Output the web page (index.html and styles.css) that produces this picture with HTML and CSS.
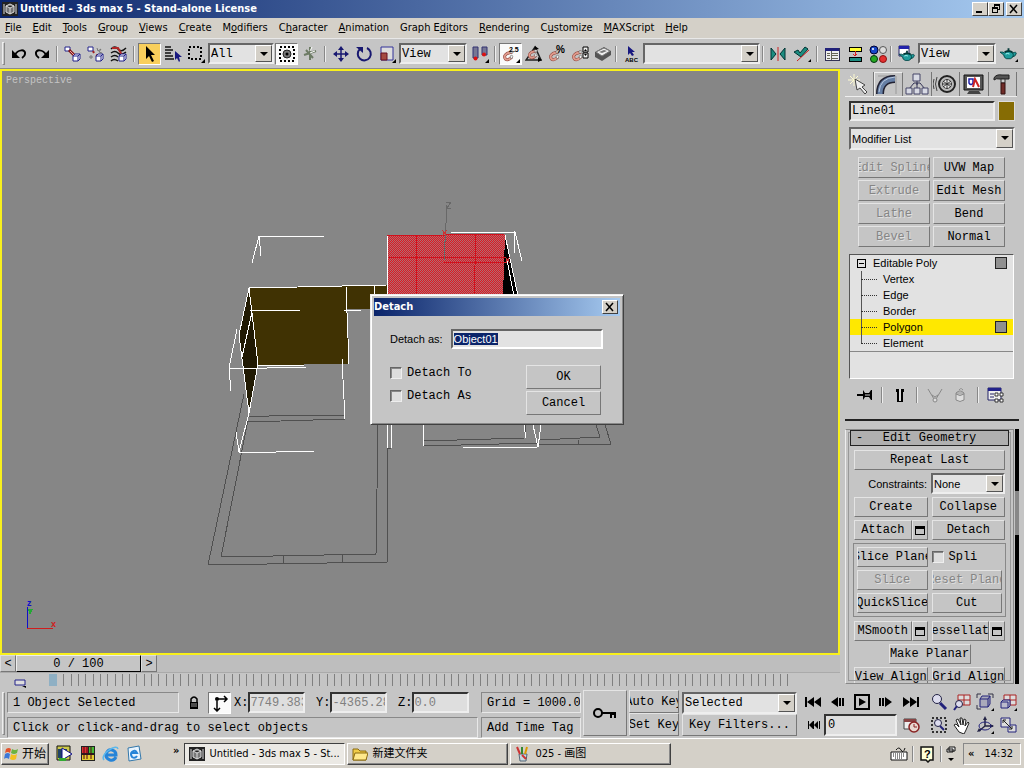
FILE: index.html
```html
<!DOCTYPE html>
<html lang="en">
<head>
    <meta charset="UTF-8">
    <meta name="viewport" content="width=device-width, initial-scale=1.0">
    <title>Untitled - 3ds max 5 - Stand-alone License</title>
    <link rel="stylesheet" href="styles.css">
</head>
<body>
    <!-- shared icon parts -->
    <svg class="defs" width="0" height="0">
        <symbol id="cube" viewBox="0 0 9 9"><path d="M1 3h5v5H1zM1 3l2-2h5v5L6 8M6 3l2-2" fill="#fff" stroke="#22228a"/></symbol>
        <symbol id="magnet" viewBox="0 0 12 12"><path d="M10 2 5 3.500Q1 6 3.500 9 6 11 10 7" fill="none" stroke="#8a4038" stroke-width="3"/><path d="M10 2 5 3.500Q1 6 3.500 9 6 11 10 7" fill="none" stroke="#e09a8c" stroke-width="2"/><path d="M8 1l3 0v2H8zM8 6l2-1 1 2-2 2z" fill="#eee" stroke="#555" stroke-width=".5"/></symbol>
        <symbol id="teapot" viewBox="0 0 18 14"><path d="M5 5Q9 2 13 5q3 5-2 7H7Q4 11 4 8L0 5h3l2 1M13 6q5-2 4 1t-4 3" fill="#1f9c9c" stroke="#064848"/><path d="M5 5q4-2 8 0M9 3V1" fill="none" stroke="#043838" stroke-width="2"/><path d="M6 7q2-1 4 0" stroke="#b4ffff" fill="none"/></symbol>
        <symbol id="maxlogo" viewBox="0 0 16 16"><path fill="#222" d="M0 1h16v14H0z"/><path d="M2 3v10M14 3v10M4 5l4-2 4 2v6l-4 2-4-2zM4 5l4 2 4-2M8 7v6" stroke="#ddd" fill="#777"/></symbol>
        <symbol id="corner" viewBox="0 0 4 4"><path d="M4 0v4H0z"/></symbol>
    </svg>

    <header class="titlebar">
        <svg width="16" height="16"><use href="#maxlogo"/></svg>
        <h1>Untitled - 3ds max 5 - Stand-alone License</h1>
        <button class="win" aria-label="Minimize"><svg width="12" height="10"><path d="M2 7h6v2H2z"/></svg></button>
        <button class="win" aria-label="Restore"><svg width="12" height="10" shape-rendering="crispEdges"><path d="M4 0h6v6H8V5h1V2H5v1H4zM2 3h6v6H2zM3 5v3h4V5z" fill-rule="evenodd"/></svg></button>
        <button class="win close" aria-label="Close"><svg width="12" height="10"><path d="M2 1l7 8M9 1 2 9" stroke="#000" stroke-width="1.500"/></svg></button>
    </header>

    <nav class="menu">
        <a href="#"><u>F</u>ile</a>
        <a href="#"><u>E</u>dit</a>
        <a href="#"><u>T</u>ools</a>
        <a href="#"><u>G</u>roup</a>
        <a href="#"><u>V</u>iews</a>
        <a href="#"><u>C</u>reate</a>
        <a href="#">M<u>o</u>difiers</a>
        <a href="#">C<u>h</u>aracter</a>
        <a href="#"><u>A</u>nimation</a>
        <a href="#">Graph E<u>d</u>itors</a>
        <a href="#"><u>R</u>endering</a>
        <a href="#">C<u>u</u>stomize</a>
        <a href="#"><u>M</u>AXScript</a>
        <a href="#"><u>H</u>elp</a>
    </nav>

    <div class="toolbar">
        <i class="handle"></i>
        <button class="tool" aria-label="Undo"><svg viewBox="0 0 18 18"><path d="M2 5v8h8z"/><path d="M5 10C8 4 16 4 15 9q0 2-3 4" fill="none" stroke="#000" stroke-width="2"/></svg></button>
        <button class="tool" aria-label="Redo"><svg viewBox="0 0 18 18"><path d="M16 5v8H8z"/><path d="M13 10C10 4 2 4 3 9q0 2 3 4" fill="none" stroke="#000" stroke-width="2"/></svg></button>
        <i class="sep"></i>
        <button class="tool" aria-label="Select and Link"><svg viewBox="0 0 18 18"><path d="M1 2h5v4H1z" fill="#fff" stroke="#22228a"/><path d="M5 5l6 6" stroke="#801818" stroke-width="3"/><path d="M6 6l4 4" stroke="#f0a0a0"/><use href="#cube" x="8" y="8" width="9" height="9"/></svg></button>
        <button class="tool" aria-label="Unlink"><svg viewBox="0 0 18 18"><path d="M1 2h5v4H1z" fill="#fff" stroke="#22228a"/><path d="M6 6l1 2M9 10l2 1" stroke="#a02020" stroke-width="2"/><path d="M10 3l1 3 3-2-2 3 3 1M2 12h4M4 10v4" stroke="#777" fill="none"/><use href="#cube" x="8" y="8" width="9" height="9"/></svg></button>
        <button class="tool" aria-label="Bind to Space Warp"><svg viewBox="0 0 18 18"><path d="M1 4q4-4 7 0t8-1M1 8q4-3 7 0t8-1M1 12q4-3 7 0M1 16q3-3 7 0" stroke="#111" fill="none" stroke-width="1.500"/><path d="M2 3h6l4 7" stroke="#b02828" stroke-width="2" fill="none"/><use href="#cube" x="8" y="8" width="9" height="9"/></svg></button>
        <i class="sep"></i>
        <button class="tool active" aria-label="Select"><svg viewBox="0 0 18 18"><path d="M5 1v13l3-3 3 6 2-1-3-6h4z"/></svg></button>
        <button class="tool" aria-label="Select by Name"><svg viewBox="0 0 18 18"><path d="M1 2h6M1 5h8M1 8h6M1 11h8M1 14h9" stroke="#111" stroke-width="1.500"/><path d="M11 6v9l2-2 2 4 1-1-1-4h3z" fill="#181880"/></svg></button>
        <button class="tool" aria-label="Selection Region"><svg viewBox="0 0 18 18"><path d="M2 2h12v12H2z" fill="none" stroke="#000" stroke-width="2" stroke-dasharray="2 2"/><use href="#corner" x="14" y="14" width="4" height="4"/></svg></button>
        <span class="combo w-all"><select aria-label="Selection Filter"><option>All</option></select></span>
        <button class="tool on" aria-label="Crossing"><svg viewBox="0 0 18 18"><path d="M2 2h14v14H2z" fill="none" stroke="#000" stroke-width="2" stroke-dasharray="2 2"/><circle cx="9" cy="9" r="4" fill="#777" stroke="#222"/><circle cx="9" cy="9" r="1.500"/></svg></button>
        <button class="tool" aria-label="Select and Manipulate"><svg viewBox="0 0 18 18"><path d="M9 2v13M3 10l12-4M5 5l7 8" stroke="#6d7b64" stroke-width="2"/><path d="M9 6l2-4M9 8l5-2" stroke="#fff"/></svg></button>
        <i class="sep"></i>
        <button class="tool" aria-label="Move"><svg viewBox="0 0 18 18"><path d="M9 3v12M3 9h12" stroke="#181870" stroke-width="1.500"/><path d="M9 1l3 4H6zM9 17l3-4H6zM1 9l4-3v6zM17 9l-4-3v6z" fill="#181870"/></svg></button>
        <button class="tool" aria-label="Rotate"><svg viewBox="0 0 18 18"><path d="M5 4a6.500 6.500 0 1 0 7-1" fill="none" stroke="#181870" stroke-width="2"/><path d="M1 2h7v6z" fill="#181870"/></svg></button>
        <button class="tool" aria-label="Scale"><svg viewBox="0 0 18 18"><path d="M3 2h12v13H3z" fill="#ddd" stroke="#333399"/><path d="M3 8h6v7H3z" fill="#a44a42" stroke="#612"/><use href="#corner" x="14" y="14" width="4" height="4"/></svg></button>
        <span class="combo w-view"><select aria-label="Reference Coordinate System"><option>View</option></select></span>
        <button class="tool" aria-label="Pivot Point Center"><svg viewBox="0 0 18 18"><path d="M2 2h5v11H2zM11 2h5v8h-5z" fill="#777795" stroke="#333370"/><circle cx="4.500" cy="13.500" r="2" fill="#d11"/><circle cx="13" cy="9.500" r="2" fill="#d11"/><use href="#corner" x="14" y="14" width="4" height="4"/></svg></button>
        <i class="sep"></i>
        <button class="tool on" aria-label="Snap Toggle"><svg viewBox="0 0 18 18"><use href="#magnet" x="0" y="5" width="12" height="12"/><text x="7" y="7" class="tiny">2.5</text><use href="#corner" x="14" y="14" width="4" height="4"/></svg></button>
        <button class="tool" aria-label="Angle Snap"><svg viewBox="0 0 18 18"><path d="M1 15h15L10 2z" fill="none" stroke="#222" stroke-width="1.500"/><path d="M10 1l4 3-5 1zM17 15l-4-3v5z"/><use href="#magnet" x="2" y="4" width="11" height="11"/></svg></button>
        <button class="tool" aria-label="Percent Snap"><svg viewBox="0 0 18 18"><use href="#magnet" x="0" y="5" width="12" height="12"/><text x="8" y="8" class="pct">%</text></svg></button>
        <button class="tool" aria-label="Spinner Snap"><svg viewBox="0 0 18 18"><use href="#magnet" x="0" y="5" width="12" height="12"/><path d="M12 2h5v5h-5zM12 8h5v5h-5z" fill="#eee" stroke="#000"/><path d="M13 6l1.500-2L16 6zM13 9l1.500 2L16 9z"/></svg></button>
        <button class="tool" aria-label="Keyboard Shortcut Override"><svg viewBox="0 0 18 18"><path d="M1 7l9-5 7 4v4l-9 6-7-4z" fill="#555"/><path d="M2 7l8-4 6 3-8 5z" fill="#eee" stroke="#777"/><path d="M5 7l5-2 3 1-5 2z" fill="#777"/></svg></button>
        <i class="sep thin"></i>
        <button class="tool" aria-label="Named Selections"><svg viewBox="0 0 18 18"><path d="M6 1v9l2-2 2 3 2-1-2-3h3z" fill="#181880"/><text x="3" y="17" class="abc">ABC</text></svg></button>
        <span class="combo w-named"><select aria-label="Named Selection Sets"><option></option></select></span>
        <i class="sep thin"></i>
        <button class="tool" aria-label="Mirror"><svg viewBox="0 0 18 18"><path d="M2 3v12l5-6zM16 3v12l-5-6z" fill="#1c8c80" stroke="#033"/><path d="M9 2v14" stroke="#c22"/></svg></button>
        <button class="tool wide" aria-label="Align"><svg viewBox="0 0 18 18"><path d="M1 7l4-2 2 3 5-6 3 2-7 8z" fill="#1c8c80" stroke="#033"/><path d="M4 16L16 5" stroke="#c22"/><use href="#corner" x="15" y="14" width="3" height="3"/></svg></button>
        <i class="sep thin"></i>
        <button class="tool" aria-label="Track View"><svg viewBox="0 0 18 18" shape-rendering="crispEdges"><path d="M2 3h14v12H2z" fill="#eee" stroke="#335"/><path d="M2 3h14v3H2z" fill="#22227a"/><path d="M4 8h3M9 8h6M4 10h3M9 10h6M4 13h3M9 13h6M8 6v9" stroke="#665"/></svg></button>
        <button class="tool" aria-label="Schematic View"><svg viewBox="0 0 18 18" shape-rendering="crispEdges"><path d="M3 2h12v4H3z" fill="#ff3" stroke="#000"/><path d="M3 12h12v4H3z" fill="#1c8c80" stroke="#000"/><path d="M9 6v5M7 9l2 2 2-2" stroke="#d22" fill="none"/></svg></button>
        <button class="tool" aria-label="Material Editor"><svg viewBox="0 0 18 18"><circle cx="5" cy="5" r="4" fill="#1848c8" stroke="#003"/><circle cx="14" cy="5" r="3.500" fill="#ddd" stroke="#555"/><circle cx="5" cy="14" r="3.500" fill="#24a820" stroke="#031"/><circle cx="14" cy="14" r="3.500" fill="#e43030" stroke="#811"/><circle cx="4" cy="4" r="1" fill="#fff"/></svg></button>
        <i class="sep thin"></i>
        <button class="tool" aria-label="Render Scene"><svg viewBox="0 0 18 18"><path d="M2 1h10v10H2z" fill="#fff" stroke="#226"/><path d="M2 1h10v3H2z" fill="#22a"/><use href="#teapot" x="2" y="4" width="16" height="14"/></svg></button>
        <span class="combo w-render"><select aria-label="Render Type"><option>View</option></select></span>
        <button class="tool" aria-label="Quick Render"><svg viewBox="0 0 18 18"><use href="#teapot" x="0" y="2" width="17" height="14"/><use href="#corner" x="15" y="14" width="3" height="3"/></svg></button>
    </div>

    <main>
        <div class="left">
            <section class="viewport">
                <svg class="scene" viewBox="2 71 836 582" preserveAspectRatio="xMinYMin meet">
                    <defs>
                        <pattern id="hatch" width="2" height="2" patternUnits="userSpaceOnUse">
                            <rect width="2" height="2" fill="#e01420"/>
                            <path d="M0 0h1v1H0zM1 1h1v1H1z" fill="#ac7072"/>
                        </pattern>
                    </defs>
                    <!-- floor outline -->
                    <g class="floor">
                        <path d="M244 394L208 565 387 562V448M248 420L221 557 376 554 378 425M248 422L346 419M248 417L290 415 345 415M283 556v8M342 555v8M387 448h4M423 441L525 438M423 446L538 443M540 440L600 437 596 425M538 445L611 444 605 425M578 440v4M525 425v13"/>
                    </g>
                    <!-- walls -->
                    <path d="M249 288L387 285V309H347L349 364 258 365z" fill="#403203"/>
                    <path d="M249 288L239 335 249 413 258 364z" fill="#211a03"/>
                    <path d="M505 235L503 296H518z"/>
                    <path d="M387 236L505 234 503 296H387z" fill="url(#hatch)"/>
                    <path class="redline" d="M387 236L505 234M387 257H505M416 236V296M476 235L474 296M387 236V258M444 262H507"/>
                    <path class="edges" d="M387 236V296M249 288L298 287 387 285M249 288L239 335 249 413 258 364 249 288M250 310H300M252 312L242 357M258 365H304M346 287L349 364M374 286V294M344 310H361M342 359L345 419M249 413L239 452M236 432L239 452 276 452 315 451M237 329L229 368 231 391M229 368H267L307 367M252 263L259 236H324M259 236L261 256M451 233L515 232 522 261M515 232L514 253M505 235L518 296M507 260L514 296M387 425V448M391 425V448M423 425V446M463 448L538 447 541 425M533 425L538 447M524 425L526 438"/>
                    <path d="M444 260L447 205M446 202h5l-4 6h4" fill="none" stroke="#686868"/>
                    <path d="M442 230l5 6M447 230l-5 6M505 257l5 6M510 257l-5 6" stroke="#c33"/>
                    <!-- world axis -->
                    <path d="M27.500 607v22" stroke="#1010c8"/>
                    <path d="M27 628.500h26" stroke="#d01c1c"/>
                    <path d="M28 609h5l-3 6z" fill="#2a3"/>
                    <text x="27" y="606" class="axis" fill="#1010c8">z</text>
                    <text x="51" y="627" class="axis" fill="#d01c1c">x</text>
                </svg>
                <span class="vlabel">Perspective</span>

                <form class="dialog">
                    <div class="dialog-title">
                        <h2>Detach</h2>
                        <button type="button" class="win close" aria-label="Close"><svg width="12" height="10"><path d="M2 1l7 8M9 1 2 9" stroke="#000" stroke-width="1.500"/></svg></button>
                    </div>
                    <div class="dialog-name">
                        <label for="objname">Detach as:</label>
                        <input id="objname" type="text" value="Object01">
                    </div>
                    <div class="dialog-body">
                        <div class="checks">
                            <label><input type="checkbox">Detach To</label>
                            <label><input type="checkbox">Detach As</label>
                        </div>
                        <div class="actions">
                            <button type="button" class="btn">OK</button>
                            <button type="button" class="btn">Cancel</button>
                        </div>
                    </div>
                </form>
            </section>
            <div class="timeslider">
                <button class="step">&lt;</button>
                <button class="thumb">0 / 100</button>
                <button class="step">&gt;</button>
            </div>
            <div class="trackbar">
                <svg width="14" height="9"><path d="M1 1h10v5H1z" fill="#ddd" stroke="#22228a"/><path d="M8 7h4v2z"/></svg>
                <div class="ticks"></div>
            </div>
        </div>

        <aside class="panel">
            <div class="tabs">
                <button aria-label="Create"><svg viewBox="0 0 24 22"><path d="M7 1v12M1 7h12M3 3l8 8M11 3l-8 8" stroke="#fffbd0"/><path d="M8 6l2 11 3-2 5 6 2-2-5-5 3-2z" fill="#eee" stroke="#444"/></svg></button>
                <button class="current" aria-label="Modify"><svg viewBox="0 0 24 22"><path d="M2 2h18v18" fill="none" stroke="#999"/><path d="M4 20Q4 5 19 5" fill="none" stroke="#223" stroke-width="8"/><path d="M4 20Q4 5 19 5" fill="none" stroke="#667fa5" stroke-width="5"/><path d="M3 18Q4 4 19 3" fill="none" stroke="#b9c9e0"/></svg></button>
                <button aria-label="Hierarchy"><svg viewBox="0 0 24 22"><path d="M12 8v4M4 16l5-6h6l5 6M12 10v6" fill="none" stroke="#335"/><path d="M8 1h7v7H8zM1 15h6v6H1zM9 15h6v6H9zM17 15h6v6h-6z" fill="#d8dae4" stroke="#446"/></svg></button>
                <button aria-label="Motion"><svg viewBox="0 0 24 22"><circle cx="14" cy="11" r="8" fill="#bbb" stroke="#222" stroke-width="2"/><circle cx="14" cy="11" r="4.500" fill="#eee" stroke="#444"/><path d="M14 6v10M9 11h10M10 8l8 6M18 8l-8 6" stroke="#333"/><path d="M4 4q-3 7 0 14M1 6q-2 5 0 10" fill="none" stroke="#444"/></svg></button>
                <button aria-label="Display"><svg viewBox="0 0 24 22"><path d="M2 2h19v15H2z" fill="#555" stroke="#111"/><path d="M5 4h13v11H5z" fill="#fff"/><path d="M7 6v4q2 3 4 0V6z" fill="none" stroke="#22a" stroke-width="1.500"/><path d="M11 14l2-8 4 8" fill="none" stroke="#c22" stroke-width="2"/><path d="M7 18h10l2 3H5z" fill="#444"/></svg></button>
                <button aria-label="Utilities"><svg viewBox="0 0 24 22"><path d="M4 5q2-4 8-3h7v4h-9q-4-1-6 1z" fill="#555" stroke="#222"/><path d="M11 6h4v4h-4z" fill="#ccc" stroke="#333"/><path d="M11 10h4v11h-4z" fill="#702c28" stroke="#311"/></svg></button>
            </div>
            <div class="objname">
                <input type="text" value="Line01" aria-label="Object name">
                <button class="swatch" aria-label="Object color"></button>
            </div>
            <span class="combo sans modlist"><select aria-label="Modifier List"><option>Modifier List</option></select></span>
            <div class="modbuttons">
                <button class="btn" disabled>Edit Spline</button>
                <button class="btn">UVW Map</button>
                <button class="btn" disabled>Extrude</button>
                <button class="btn">Edit Mesh</button>
                <button class="btn" disabled>Lathe</button>
                <button class="btn">Bend</button>
                <button class="btn" disabled>Bevel</button>
                <button class="btn">Normal</button>
            </div>
            <div class="stack">
                <div class="root"><span class="minus"></span>Editable Poly<i class="box"></i></div>
                <ul>
                    <li>Vertex</li>
                    <li>Edge</li>
                    <li>Border</li>
                    <li class="selected">Polygon<i class="box"></i></li>
                    <li>Element</li>
                </ul>
            </div>
            <div class="stacktools">
                <button class="tool" aria-label="Pin Stack"><svg viewBox="0 0 18 18"><path d="M1 9h6" stroke="#000" stroke-width="2"/><path d="M7 4v10l2-3h4l2 3h1V4h-1l-2 3H9z"/><path d="M9 9h5" stroke="#ccc"/></svg></button>
                <i class="sep"></i>
                <button class="tool" aria-label="Show End Result"><svg viewBox="0 0 18 18"><path d="M5 3h8v3h-1v10H6V6H5z"/><path d="M8 3h2v12H8z" fill="#ddd"/></svg></button>
                <i class="sep"></i>
                <button class="tool" aria-label="Make Unique" disabled><svg viewBox="0 0 18 18"><path d="M2 3l6 10M16 3l-6 10M6 9l3 2 3-2" fill="none" stroke="#888"/><circle cx="9" cy="14" r="2" fill="#ddd" stroke="#888"/></svg></button>
                <button class="tool" aria-label="Remove Modifier" disabled><svg viewBox="0 0 18 18"><path d="M5 7h8v7q-4 3-8 0zM5 7q4-4 8 0M8 4q2-3 4 0M5 8q4 3 8 0" fill="#ddd" stroke="#888"/></svg></button>
                <i class="sep"></i>
                <button class="tool" aria-label="Configure Modifier Sets"><svg viewBox="0 0 18 18"><path d="M2 2h13v12H2z" fill="#eee" stroke="#226"/><path d="M2 2h13v3H2z" fill="#22228a"/><path d="M4 8h4M4 11h4" stroke="#226"/><path d="M9 7h3v3H9zM14 7h3v3h-3zM9 13h3v3H9zM14 13h3v3h-3z" fill="#fff" stroke="#333"/></svg></button>
            </div>
            <div class="rollup-area">
                <div class="rollup">
                    <button class="rollup-title"><span>-</span>Edit Geometry</button>
                    <button class="btn">Repeat Last</button>
                    <div class="constraints">
                        <label for="constraints">Constraints:</label>
                        <span class="combo sans"><select id="constraints"><option>None</option></select></span>
                    </div>
                    <div class="pair">
                        <button class="btn">Create</button>
                        <button class="btn">Collapse</button>
                    </div>
                    <div class="pair">
                        <div class="split"><button class="btn">Attach</button><button class="btn opt" aria-label="Attach List"><i></i></button></div>
                        <button class="btn">Detach</button>
                    </div>
                    <div class="group">
                        <div class="pair">
                            <button class="btn">Slice Plane</button>
                            <label class="check"><input type="checkbox">Spli</label>
                        </div>
                        <div class="pair">
                            <button class="btn" disabled>Slice</button>
                            <button class="btn" disabled>Reset Plane</button>
                        </div>
                        <div class="pair">
                            <button class="btn">QuickSlice</button>
                            <button class="btn">Cut</button>
                        </div>
                    </div>
                    <div class="pair">
                        <div class="split"><button class="btn">MSmooth</button><button class="btn opt" aria-label="MSmooth Settings"><i></i></button></div>
                        <div class="split"><button class="btn">Tessellate</button><button class="btn opt" aria-label="Tessellate Settings"><i></i></button></div>
                    </div>
                    <button class="btn planar">Make Planar</button>
                    <div class="pair">
                        <button class="btn">View Align</button>
                        <button class="btn">Grid Align</button>
                    </div>
                </div>
                <div class="scroll"><i></i></div>
            </div>
        </aside>
    </main>

    <footer class="status">
        <i class="handle"></i>
        <div class="status-left">
            <div class="coords">
                <output class="field selinfo">1 Object Selected</output>
                <button class="tool" aria-label="Selection Lock"><svg viewBox="0 0 18 18"><path d="M5 8h8v7H5z"/><path d="M6 8V5q3-4 6 0v3" fill="none" stroke="#000" stroke-width="1.500"/><path d="M6 10h6M6 12h6" stroke="#999"/></svg></button>
                <button class="tool on" aria-label="Absolute Mode"><svg viewBox="0 0 18 18"><circle cx="6" cy="5" r="2"/><path d="M6 5h10M13 2l3 3-3 3M6 7v10M3 14l3 3 3-3" fill="none" stroke="#000" stroke-width="1.500"/></svg></button>
                <label>X:<input type="text" value="7749.383"></label>
                <label>Y:<input type="text" value="-4365.28"></label>
                <label>Z:<input type="text" value="0.0"></label>
            </div>
            <div class="field">Click or click-and-drag to select objects</div>
        </div>
        <div class="gridinfo">
            <div class="field">Grid = 1000.0</div>
            <div class="field">Add Time Tag</div>
        </div>
        <button class="btn keybtn" aria-label="Set Keys"><svg width="26" height="14"><circle cx="6" cy="7" r="4" fill="none" stroke="#000" stroke-width="2"/><path d="M10 6h14v6h-2V9h-2v3h-2V8h-8z"/></svg></button>
        <div class="keys">
            <button class="btn">Auto Key</button>
            <button class="btn">Set Key</button>
        </div>
        <div class="filters">
            <span class="combo"><select aria-label="Key mode"><option>Selected</option></select></span>
            <button class="btn">Key Filters...</button>
        </div>
        <div class="playback">
            <div>
                <button class="tool" aria-label="Go to Start"><svg viewBox="0 0 18 18"><path d="M1 4h2v10H1zM10 4v10L3 9zM17 4v10l-7-5z"/></svg></button>
                <button class="tool" aria-label="Previous Frame"><svg viewBox="0 0 18 18"><path d="M10 4v10L3 9zM11 5h2v8h-2zM14 5h2v8h-2z"/></svg></button>
                <button class="tool" aria-label="Play"><svg viewBox="0 0 18 18"><path d="M2 2h14v14H2z" fill="none" stroke="#000" stroke-width="2"/><path d="M6 5l7 4-7 4z"/></svg></button>
                <button class="tool" aria-label="Next Frame"><svg viewBox="0 0 18 18"><path d="M2 5h2v8H2zM5 5h2v8H5zM8 4v10l7-5z"/></svg></button>
                <button class="tool" aria-label="Go to End"><svg viewBox="0 0 18 18"><path d="M1 4v10l7-5zM8 4v10l7-5zM15 4h2v10h-2z"/></svg></button>
            </div>
            <div>
                <button class="tool" aria-label="Key Mode"><svg viewBox="0 0 18 18"><path d="M4 5h1v8H4zM9 5v8L5 9zM9 5h1v8H9zM14 5v8l-4-4zM15 5h1v8h-1z"/></svg></button>
                <input type="text" value="0" aria-label="Current frame">
                <button class="tool" aria-label="Time Configuration"><svg viewBox="0 0 18 18"><path d="M2 3h12v10H2z" fill="#eee" stroke="#444"/><path d="M2 3h12v3H2z" fill="#844"/><circle cx="12" cy="11" r="5" fill="#e8d8d0" stroke="#822" stroke-width="1.500"/><path d="M12 8v3h3" fill="none" stroke="#822"/></svg></button>
            </div>
        </div>
        <div class="nav">
            <button class="tool" aria-label="Zoom"><svg viewBox="0 0 18 18"><circle cx="7" cy="6" r="4.500" fill="#dde" stroke="#224"/><path d="M10 10l6 6" stroke="#22227a" stroke-width="3"/></svg></button>
            <button class="tool" aria-label="Zoom All"><svg viewBox="0 0 18 18"><path d="M5 2h12v10H5zM11 2v10M5 7h12" fill="#ddd" stroke="#a22"/><circle cx="6" cy="11" r="3.500" fill="#dde" stroke="#224"/><path d="M4 13l-3 4" stroke="#22227a" stroke-width="2"/></svg></button>
            <button class="tool" aria-label="Zoom Extents"><svg viewBox="0 0 18 18"><path d="M1 5V1h4M12 1h5v4M1 12v4h4" fill="none" stroke="#334"/><path d="M4 6h8v8H4zM4 6l2-3h8v8l-2 3M12 6l2-3" fill="#aab" stroke="#22227a"/><use href="#corner" x="15" y="15" width="3" height="3"/></svg></button>
            <button class="tool" aria-label="Zoom Extents All"><svg viewBox="0 0 18 18"><path d="M5 2h12v10H5zM11 2v10M5 7h12" fill="#ddd" stroke="#a22"/><path d="M2 9h7v6H2zM2 9l2-2h7v6l-2 2" fill="#bbc" stroke="#22227a"/><use href="#corner" x="15" y="15" width="3" height="3"/></svg></button>
            <button class="tool" aria-label="Region Zoom"><svg viewBox="0 0 18 18"><path d="M2 2h14v14H2z" fill="none" stroke="#000" stroke-width="1.500" stroke-dasharray="2 2"/><circle cx="8" cy="7" r="3.500" fill="#dde" stroke="#224"/><path d="M10 10l4 4" stroke="#22227a" stroke-width="2"/></svg></button>
            <button class="tool" aria-label="Pan"><svg viewBox="0 0 18 18"><path d="M6 16L1 9l2-1 3 3-3-7 2-1 3 6-1-7h2l1 7 1-6 2 1-1 6 3-4 1 1-3 7-2 4z" fill="#fff" stroke="#222"/></svg></button>
            <button class="tool" aria-label="Arc Rotate"><svg viewBox="0 0 18 18"><path d="M9 2v8l-6 5M9 10h8" stroke="#224" stroke-width="1.500" fill="none"/><path d="M9 0l2 4H7zM18 10l-4-2v4zM1 16l2-4 2 3z" fill="#224"/><ellipse cx="9" cy="10" rx="6" ry="4" fill="none" stroke="#22227a"/><use href="#corner" x="15" y="15" width="3" height="3"/></svg></button>
            <button class="tool" aria-label="Min/Max Toggle"><svg viewBox="0 0 18 18"><path d="M9 9h8v7H9z" fill="#ddd" stroke="#22227a"/><path d="M2 2h9v9H2z" fill="#ddd" stroke="#22227a"/><path d="M4 4l9 9M4 7V4h3M13 10v3h-3" fill="none" stroke="#222"/></svg></button>
        </div>
    </footer>

    <div class="taskbar">
        <button class="start"><svg width="16" height="16" viewBox="0 0 16 16"><path d="M2 3q3-2 5 0L6 7Q4 5 1 7z" fill="#e4532c"/><path d="M8 3q3 2 6 0l-1 4q-3 2-6 0z" fill="#6cb33f"/><path d="M1 8q3-2 5 0l-1 5q-3-2-5 0z" fill="#3c78d8"/><path d="M7 8q3 2 6 0l-1 5q-3 2-6 0z" fill="#f4c020"/></svg>开始</button>
        <div class="quick">
            <button aria-label="Media Player"><svg viewBox="0 0 18 18"><path d="M1 1h13v14H1z" fill="#ccc84a" stroke="#111"/><path d="M2 4h9v9H2z" fill="#246"/><path d="M6 3l10 6-10 6z" fill="#fff" stroke="#118"/><path d="M3 13h7v3H3z" fill="#3a3"/></svg></button>
            <button aria-label="Media Tool"><svg viewBox="0 0 18 18"><path d="M2 1h14v15H2z" fill="#222"/><path d="M3 2h6v6H3z" fill="#d33"/><path d="M10 2h5v6h-5z" fill="#4b3"/><path d="M3 10h12v5H3z" fill="#e4cf30"/><path d="M5 2v12M8 2v12M12 2v12" stroke="#501"/></svg></button>
            <button aria-label="Internet Explorer"><svg viewBox="0 0 18 18"><path d="M14 12q-2 4-6 3-5-2-4-6 2-5 6-4 4 1 4 5H5" fill="none" stroke="#2684d8" stroke-width="3"/><path d="M2 15Q-1 11 7 5q8-5 9-1" fill="none" stroke="#5cb8ec" stroke-width="1.500"/></svg></button>
            <button aria-label="Outlook Express"><svg viewBox="0 0 18 18"><path d="M3 3l11-2 2 13-12 2z" fill="#e8f4ff" stroke="#37a"/><path d="M12 11q-2 3-5 1-2-3 0-5 3-3 5 1H7" fill="none" stroke="#2684d8" stroke-width="2"/></svg></button>
        </div>
        <span class="more">»</span>
        <button class="task pressed"><svg width="16" height="16"><use href="#maxlogo"/></svg>Untitled - 3ds max 5 - St...</button>
        <button class="task"><svg width="16" height="16" viewBox="0 0 16 16"><path d="M1 3h5l2 2h6v9H1z" fill="#f0cc48" stroke="#8a6a10"/><path d="M3 7h13l-2 7H1z" fill="#ffe98c" stroke="#8a6a10"/></svg>新建文件夹</button>
        <button class="task"><svg width="16" height="16" viewBox="0 0 16 16"><path d="M4 8h8l-1 7H5z" fill="#c8d8e0" stroke="#567"/><path d="M5 8L2 1" stroke="#c33" stroke-width="2"/><path d="M7 8V1" stroke="#383" stroke-width="2"/><path d="M10 8l2-7" stroke="#d90" stroke-width="2"/><path d="M7 9l4 4" stroke="#c33" stroke-width="2"/></svg>025 - 画图</button>
        <div class="lang">
            <svg width="18" height="18" viewBox="0 0 18 18"><path d="M6 5q3-4 5 0t4-2" fill="none" stroke="#111"/><path d="M1 7h16v8H1z" fill="#fff" stroke="#111"/><path d="M3 9h12M3 11h12M5 13h8" stroke="#111" stroke-dasharray="1 1"/></svg>
            <i class="sep"></i>
            <svg width="18" height="18" viewBox="0 0 18 18"><path d="M3 2h12v13h-3l-2 2-2-2H3z" fill="#ffffd8" stroke="#111" stroke-width="1.500"/><text x="6" y="13" class="help">?</text></svg>
            <i class="sep"></i>
            <svg width="10" height="18" viewBox="0 0 10 18"><path d="M3 2h6v4H3zM1 4h6v3H1z" fill="#eee" stroke="#111"/><path d="M2 13h6l-3 3z"/></svg>
        </div>
        <div class="tray"><span>«</span><time>14:32</time></div>
    </div>

    <script>
        // one tick per frame on the track bar
        const frames = 100;
        const ticks = document.querySelector('.ticks');
        for (let i = 0; i < frames; i++) {
            ticks.appendChild(document.createElement('span'));
        }
        const objname = document.getElementById('objname');
        objname.focus({ preventScroll: true });
        objname.select();
    </script>
</body>
</html>
```
FILE: styles.css
```css
* {
    box-sizing: border-box;
}
body {
    margin: 0;
    height: 100vh;
    display: flex;
    flex-direction: column;
    overflow: hidden;
    background: #c5c5c5;
    color: #000;
    font-family: "Liberation Mono", "Noto Sans CJK SC", monospace;
    font-size: 12px;
    line-height: 16px;
}
button, input, select {
    margin: 0;
    padding: 0;
    border: 0;
    border-radius: 0;
    background: none;
    color: inherit;
    font: inherit;
    outline: none;
}
svg {
    display: block;
    flex: none;
}
h1, h2, ul {
    margin: 0;
    padding: 0;
}
.defs {
    position: absolute;
}

/* title bar and menu */
.titlebar {
    display: flex;
    align-items: center;
    height: 19px;
    padding: 0 2px;
    background: linear-gradient(to right, #0a246a, #a6caf0);
    border-bottom: 1px solid #d4d0c8;
}
h1, h2 {
    flex: 1;
    color: #fff;
    font-family: "DejaVu Sans Condensed", sans-serif;
    font-size: 11px;
    font-weight: bold;
    line-height: 16px;
}
h1 {
    padding-left: 2px;
}
.win {
    display: flex;
    align-items: center;
    justify-content: center;
    width: 16px;
    height: 14px;
    background: #d4d0c8;
    border: 1px solid;
    border-color: #fff #404040 #404040 #fff;
}
.titlebar .close {
    margin-left: 2px;
}
.menu {
    display: flex;
    gap: 11px;
    height: 19px;
    padding: 1px 5px;
    background: #d4d0c8;
    font-family: "DejaVu Sans Condensed", sans-serif;
    font-size: 11px;
    white-space: nowrap;
}
.menu a {
    color: #000;
    text-decoration: none;
}

/* tool buttons */
.toolbar {
    display: flex;
    align-items: center;
    height: 31px;
    padding-right: 4px;
    border-top: 1px solid #e8e8e8;
    border-bottom: 1px solid #8a8a8a;
}
.handle {
    flex: none;
    align-self: stretch;
    width: 3px;
    margin: 3px 2px;
    border: 1px solid;
    border-color: #eee #888 #888 #eee;
}
.tool {
    display: flex;
    align-items: center;
    justify-content: center;
    flex: none;
    width: 23px;
    height: 22px;
}
.tool svg {
    width: 18px;
    height: 18px;
}
.tool.wide {
    width: 26px;
}
.tool.active, .tool.on {
    background: #f9cf5c;
    border: 1px solid;
    border-color: #777 #fff #fff #777;
}
.tool.on {
    background: #fafafa;
}
.sep {
    flex: none;
    width: 2px;
    height: 16px;
    margin: 0 3px;
    border-left: 1px solid #888;
    border-right: 1px solid #eee;
}
.sep.thin {
    margin: 0 2px 0 1px;
}
.tiny, .abc {
    font: bold 7px "Liberation Sans", sans-serif;
}
.abc {
    font-size: 6px;
}
.pct {
    font: bold 10px "Liberation Sans", sans-serif;
}

/* drop-downs */
.combo {
    position: relative;
    display: block;
    flex: none;
    height: 21px;
    background: #e2e2e2;
    border: 2px solid;
    border-color: #666 #eee #eee #666;
}
.toolbar .combo {
    margin: 0 1px;
}
.combo select {
    display: block;
    appearance: none;
    width: 100%;
    height: 100%;
    padding: 0 18px 0 1px;
}
.combo::after {
    content: "";
    position: absolute;
    top: 0;
    right: 0;
    bottom: 0;
    width: 15px;
    background: #d4d0c8;
    border: 1px solid;
    border-color: #fff #555 #555 #fff;
    pointer-events: none;
}
.combo::before {
    content: "";
    position: absolute;
    z-index: 1;
    top: 7px;
    right: 4px;
    border: 4px solid transparent;
    border-top-color: #000;
    border-bottom: 0;
    pointer-events: none;
}
.sans {
    font-family: "Liberation Sans", sans-serif;
    font-size: 11px;
}
.w-all {
    width: 66px;
}
.w-view {
    width: 68px;
}
.toolbar .w-named {
    flex: 1;
}
.w-render {
    width: 78px;
}

/* work area */
main {
    flex: 1;
    min-height: 0;
    display: flex;
}
.left {
    flex: 1;
    min-width: 0;
    display: flex;
    flex-direction: column;
}
.viewport {
    position: relative;
    flex: 1;
    min-height: 0;
    background: #868686;
    border: 2px solid #f8f01c;
}
.scene {
    width: 100%;
    height: 100%;
    shape-rendering: crispEdges;
}
.floor {
    fill: none;
    stroke: #505050;
}
.edges {
    fill: none;
    stroke: #fff;
}
.redline {
    fill: none;
    stroke: #d0101c;
}
.axis {
    font: bold 9px "Liberation Sans", sans-serif;
}
.vlabel {
    position: absolute;
    top: 2px;
    left: 4px;
    color: #c4c4c4;
    font-size: 10px;
}
.timeslider {
    display: flex;
    height: 18px;
    background: #bebebe;
    border-bottom: 1px solid #aaa;
}
.timeslider button {
    width: 16px;
    background: #c5c5c5;
    border: 1px solid;
    border-color: #ddd #777 #777 #ddd;
    line-height: 14px;
}
.timeslider .thumb {
    width: 125px;
    border-color: #eee #000 #000 #eee;
}
.trackbar {
    display: flex;
    height: 16px;
    padding: 1px 51px 2px 14px;
}
.trackbar svg {
    margin: 5px 21px 0 0;
}
.ticks {
    flex: 1;
    display: flex;
    height: 12px;
    border-left: 8px solid #8fb0c4;
}
.ticks span {
    flex: 1;
    border-right: 1px solid #808080;
}

/* Detach dialog */
.dialog {
    position: absolute;
    left: 368px;
    top: 223px;
    width: 254px;
    padding: 3px 3px 9px;
    background: #c5c5c5;
    border: 1px solid;
    border-color: #eee #404040 #404040 #eee;
    box-shadow: inset 1px 1px #fff, inset -1px -1px #888;
}
.dialog-title {
    display: flex;
    align-items: center;
    height: 18px;
    padding-right: 2px;
    background: linear-gradient(to right, #0a246a, #a6caf0);
}
.dialog-name {
    display: flex;
    align-items: center;
    gap: 8px;
    padding: 13px 17px 16px 16px;
    font-family: "Liberation Sans", sans-serif;
    font-size: 11px;
}
.dialog-name input {
    flex: 1;
    min-width: 0;
    height: 20px;
    padding-left: 1px;
    background: #e2e2e2;
    border: 2px solid;
    border-color: #666 #fff #fff #666;
}
.dialog-name input::selection {
    background: #0a246a;
    color: #fff;
}
.dialog-body {
    display: flex;
    justify-content: space-between;
    padding: 0 19px 0 16px;
}
.checks, .actions {
    display: flex;
    flex-direction: column;
    gap: 2px;
}
.checks {
    gap: 7px;
}
.checks label, .check {
    display: flex;
    align-items: center;
    gap: 5px;
}
input[type="checkbox"] {
    appearance: none;
    width: 12px;
    height: 12px;
    background: #ddd;
    border: 1px solid;
    border-color: #666 #eee #eee #666;
    box-shadow: inset 1px 1px #888;
}
.actions .btn {
    width: 75px;
    height: 24px;
}

/* push buttons */
.btn {
    display: flex;
    align-items: center;
    justify-content: center;
    min-width: 0;
    height: 20px;
    overflow: hidden;
    white-space: nowrap;
    border: 1px solid;
    border-color: #e4e4e4 #777 #777 #e4e4e4;
}
.btn:disabled {
    color: #858585;
    text-shadow: 1px 1px #e0e0e0;
}

/* command panel */
.panel {
    flex: none;
    width: 184px;
    display: flex;
    flex-direction: column;
    padding: 3px 5px 5px;
}
.tabs {
    display: flex;
    height: 25px;
    margin-right: 2px;
    border-bottom: 1px solid #eee;
}
.tabs button {
    flex: 1;
    display: flex;
    align-items: center;
    justify-content: center;
    border-right: 1px solid #777;
}
.tabs button.current {
    border-top: 1px solid #eee;
    border-left: 1px solid #eee;
}
.tabs svg {
    width: 24px;
    height: 22px;
}
.objname {
    display: flex;
    gap: 3px;
    margin: 4px 4px 6px;
}
.objname input {
    flex: 1;
    min-width: 0;
    height: 20px;
    padding-left: 1px;
}
.objname input, .coords input, .playback input {
    background: #dedede;
    border: 2px solid;
    border-color: #333 #eee #eee #333;
}
.swatch {
    width: 17px;
    background: #866c04;
    border: 1px solid #ddd;
}
.modlist {
    margin: 0 4px;
    height: 23px;
}
.modbuttons {
    display: grid;
    grid-template-columns: 1fr 1fr;
    gap: 2px 3px;
    margin: 7px 14px 7px 13px;
}
.modbuttons .btn {
    height: 21px;
}
.stack {
    height: 125px;
    margin: 0 5px 0 4px;
    background: #e2e2e2;
    border: 1px solid;
    border-color: #555 #fff #fff #555;
    font-family: "Liberation Sans", sans-serif;
    font-size: 11px;
}
.stack ul {
    list-style: none;
    border-bottom: 1px solid #888;
}
.root, .stack li {
    display: flex;
    align-items: center;
    height: 16px;
}
.root {
    padding-left: 7px;
}
.minus {
    width: 9px;
    height: 9px;
    margin-right: 7px;
    border: 1px solid #000;
    background: linear-gradient(#000, #000) center / 5px 1px no-repeat;
}
.stack li {
    background: linear-gradient(#555, #555) 11px 0 / 1px 16px no-repeat;
}
.stack li:last-child {
    background-size: 1px 8px;
}
.stack li::before {
    content: "";
    width: 16px;
    margin: 0 6px 0 11px;
    border-top: 1px dotted #333;
}
.stack .selected {
    background-color: #ffe800;
}
.box {
    width: 12px;
    height: 12px;
    margin: 0 6px 0 auto;
    background: #909090;
    border: 1px solid #222;
}
.stacktools {
    display: flex;
    align-items: center;
    justify-content: space-between;
    margin: 5px 12px 13px 8px;
}
.rollup-area {
    flex: 1;
    min-height: 0;
    display: flex;
    gap: 1px;
    padding-top: 8px;
    border-top: 2px solid #222;
}
.rollup {
    flex: 1;
    display: flex;
    flex-direction: column;
    gap: 3px;
    overflow: hidden;
    padding: 0 8px;
    border: 1px solid;
    border-color: #888 #888 #888 #eee;
    outline: 1px solid #999;
    outline-offset: -4px;
}
.rollup > * {
    flex: none;
}
.rollup-title {
    position: relative;
    height: 16px;
    margin: 0 -4px 1px;
    background: #b0b0b0;
    border: 1px solid #222;
    line-height: 14px;
}
.rollup-title span {
    position: absolute;
    left: 5px;
}
.constraints {
    display: flex;
    align-items: center;
    justify-content: flex-end;
    gap: 4px;
    font-family: "Liberation Sans", sans-serif;
    font-size: 11px;
}
.constraints .combo {
    width: 74px;
}
.pair {
    display: grid;
    grid-template-columns: 1fr 1fr;
    gap: 4px;
}
.split {
    display: flex;
    min-width: 0;
}
.split .btn {
    flex: 1;
}
.split .opt {
    flex: 0 0 16px;
}
.opt i {
    width: 10px;
    height: 9px;
    border: 1px solid #000;
    border-top-width: 3px;
}
.group {
    display: flex;
    flex-direction: column;
    gap: 3px;
    margin: 0 -1px 1px;
    padding: 3px;
    border: 1px solid #888;
}
.planar {
    align-self: center;
    width: 82px;
}
.scroll {
    width: 4px;
    background: #000;
    padding-top: 62px;
}
.scroll i {
    display: block;
    height: 44px;
    background: #888;
}

/* status bar */
.status {
    display: flex;
    height: 49px;
}
.status .btn {
    height: 22px;
}
.field {
    height: 21px;
    padding: 2px 5px;
    white-space: nowrap;
    overflow: hidden;
    border: 1px solid;
    border-color: #888 #e8e8e8 #e8e8e8 #888;
}
.status-left, .gridinfo {
    display: flex;
    flex-direction: column;
    gap: 4px;
    padding-top: 3px;
}
.status-left {
    flex: 1;
    min-width: 0;
}
.coords {
    display: flex;
    align-items: center;
    gap: 3px;
    height: 21px;
}
.selinfo {
    width: 172px;
}
.coords label {
    display: flex;
    align-items: center;
    width: 71px;
    margin-right: 8px;
}
.coords input {
    flex: 1;
    min-width: 0;
    height: 21px;
    color: #808080;
}
.gridinfo {
    width: 100px;
    margin: 0 2px 0 3px;
}
.status .keybtn {
    width: 44px;
    height: 46px;
    margin: 1px 2px 0 0;
}
.keys {
    width: 50px;
    margin-right: 3px;
    padding-top: 1px;
}
.keys .btn {
    width: 100%;
    height: 23px;
}
.filters {
    width: 115px;
    padding-top: 3px;
}
.filters .combo {
    height: 22px;
}
.filters .btn {
    width: 100%;
}
.playback {
    width: 121px;
    margin: 2px 5px 0 4px;
}
.playback div {
    display: flex;
    justify-content: space-between;
    height: 23px;
}
.playback input {
    flex: 1;
    min-width: 0;
    height: 22px;
    margin-right: 2px;
    padding-left: 2px;
}
.nav {
    display: grid;
    grid-template-columns: repeat(4, 23px);
    grid-auto-rows: 23px;
    margin: 2px 5px 0 0;
}

/* task bar */
.taskbar {
    display: flex;
    align-items: center;
    height: 30px;
    padding: 0 3px 0 1px;
    background: #d4d0c8;
    border-top: 1px solid #fff;
    font-family: "DejaVu Sans Condensed", "Noto Sans CJK SC", sans-serif;
    font-size: 11px;
}
.start, .task {
    display: flex;
    align-items: center;
    gap: 2px;
    height: 22px;
    padding: 0 4px;
    overflow: hidden;
    white-space: nowrap;
    border: 1px solid;
    border-color: #fff #404040 #404040 #fff;
    box-shadow: inset -1px -1px #888;
}
.start {
    width: 48px;
    padding: 0 2px;
    font-size: 12px;
}
.quick {
    display: flex;
    gap: 5px;
    margin-left: 7px;
}
.quick svg {
    width: 18px;
    height: 18px;
}
.more {
    margin: 0 5px 6px 30px;
    font-weight: bold;
}
.task {
    flex: 0 1 161px;
    margin-right: 2px;
    gap: 4px;
}
.task.pressed {
    background: #ebe9e4;
    border-color: #404040 #fff #fff #404040;
    box-shadow: none;
}
.lang {
    display: flex;
    align-items: center;
    gap: 1px;
    margin-left: auto;
}
.help {
    font: bold 11px "Liberation Sans", sans-serif;
}
.tray {
    display: flex;
    align-items: center;
    gap: 10px;
    height: 22px;
    margin-left: 7px;
    padding: 0 7px 0 4px;
    border: 1px solid;
    border-color: #888 #fff #fff #888;
}
.tray span {
    font-weight: bold;
}
```
